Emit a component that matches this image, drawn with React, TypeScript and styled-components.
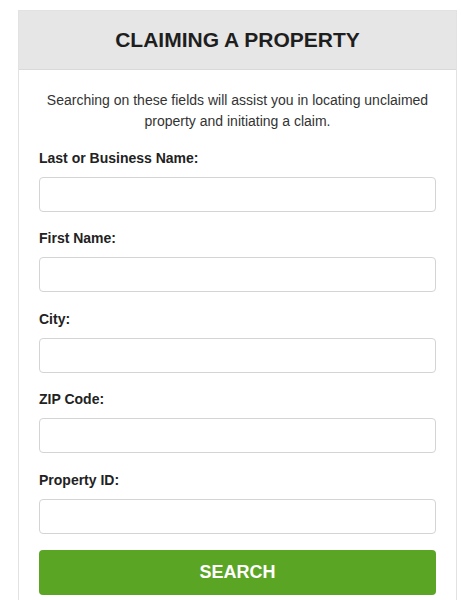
import React from "react";
import styled, { createGlobalStyle } from "styled-components";

const Global = createGlobalStyle`
  html, body { margin: 0; padding: 0; background: #ffffff; }
  body { font-family: "Liberation Sans", Arial, sans-serif; }
  * { box-sizing: border-box; }
`;

const Page = styled.div`
  padding: 10px 4px 0 18px;
`;

const Card = styled.section`
  width: 439px;
  border: 1px solid #e2e2e2;
  border-bottom: none;
  background: #ffffff;
`;

const Header = styled.header`
  height: 59px;
  background: #e6e6e6;
  border-bottom: 1px solid #d9d9d9;
  display: flex;
  align-items: center;
  justify-content: center;
`;

const Title = styled.h2`
  margin: 0;
  font-size: 21px;
  font-weight: 700;
  color: #1e1e1e;
  letter-spacing: 0;
`;

const Body = styled.form`
  padding: 20px 20px 6px 20px;
  display: flex;
  flex-direction: column;
`;

const Intro = styled.p`
  margin: 0 0 16px 0;
  text-align: center;
  font-size: 14px;
  line-height: 21px;
  color: #333333;
`;

const Field = styled.div`
  display: flex;
  flex-direction: column;
  margin-bottom: 16.4px;
`;

const Label = styled.label`
  font-size: 14px;
  font-weight: 700;
  line-height: 20px;
  color: #222222;
  margin-bottom: 9px;
`;

const Input = styled.input`
  width: 100%;
  height: 35px;
  border: 1px solid #d4d4d4;
  border-radius: 4px;
  background: #ffffff;
  font-family: inherit;
  font-size: 14px;
  padding: 0 10px;
  outline: none;
`;

const Button = styled.button`
  width: 100%;
  height: 45px;
  border: none;
  border-radius: 4px;
  background: #5ba524;
  color: #ffffff;
  font-family: inherit;
  font-size: 18px;
  font-weight: 700;
  cursor: pointer;
`;

const fields = [
  "Last or Business Name:",
  "First Name:",
  "City:",
  "ZIP Code:",
  "Property ID:",
];

export default function App() {
  return (
    <>
      <Global />
      <Page>
        <Card>
          <Header>
            <Title>CLAIMING A PROPERTY</Title>
          </Header>
          <Body onSubmit={(e) => e.preventDefault()}>
            <Intro>
              Searching on these fields will assist you in locating unclaimed
              property and initiating a claim.
            </Intro>
            {fields.map((f) => (
              <Field key={f}>
                <Label>{f}</Label>
                <Input type="text" />
              </Field>
            ))}
            <Button type="submit">SEARCH</Button>
          </Body>
        </Card>
      </Page>
    </>
  );
}
